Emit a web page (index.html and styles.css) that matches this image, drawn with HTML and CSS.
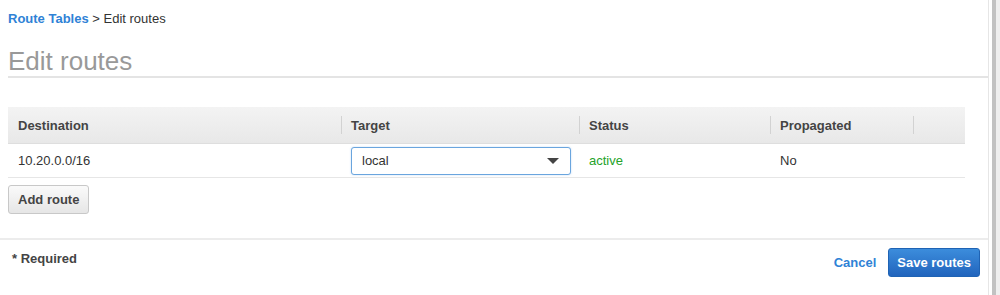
FILE: index.html
```html
<!DOCTYPE html>
<html lang="en">
<head>
  <meta charset="UTF-8">
  <meta name="viewport" content="width=device-width, initial-scale=1.0">
  <title>Edit routes</title>
  <link rel="stylesheet" href="styles.css">
</head>
<body>
  <div class="page">
    <div class="main">
      <div class="crumbs">
        <a href="#">Route Tables</a> &gt; Edit routes
      </div>

      <h1>Edit routes</h1>

      <table class="routes">
        <thead>
          <tr>
            <th class="col-dest">Destination</th>
            <th class="col-target">Target</th>
            <th class="col-status">Status</th>
            <th class="col-prop">Propagated</th>
            <th class="col-del"></th>
          </tr>
        </thead>
        <tbody>
          <tr>
            <td>10.20.0.0/16</td>
            <td>
              <div class="select">
                <span>local</span>
                <span class="caret"></span>
              </div>
            </td>
            <td class="active">active</td>
            <td>No</td>
            <td></td>
          </tr>
        </tbody>
      </table>

      <button class="btn">Add route</button>

      <div class="footer">
        <div class="required">* Required</div>
        <div class="actions">
          <a href="#" class="cancel">Cancel</a>
          <button class="btn btn-primary">Save routes</button>
        </div>
      </div>
    </div>

    <div class="scrollbar">
      <div class="thumb"></div>
    </div>
  </div>
</body>
</html>
```

FILE: styles.css
```css
body {
  margin: 0;
  font-family: "Liberation Sans", Arial, Helvetica, sans-serif;
  font-size: 13px;
  color: #333;
  background: #fff;
}
.page {
  display: flex;
  height: 295px;
  overflow: hidden;
}
.main {
  flex: 1;
  min-width: 0;
  border-right: 1px solid #e6e6e6;
}
.scrollbar {
  flex: none;
  width: 11px;
  display: flex;
  padding-left: 3px;
  box-sizing: border-box;
}
.thumb {
  width: 4px;
  background: #c2c2c2;
}
.scrollbar::after {
  content: "";
  flex: 1;
  background: #efefef;
}

.crumbs {
  padding: 11px 8px 0;
  line-height: 15px;
  color: #333;
}
.crumbs a {
  color: #2f82d6;
  font-weight: bold;
  text-decoration: none;
}

h1 {
  margin: 20px 0 0 8px;
  font-size: 26px;
  line-height: 30px;
  font-weight: normal;
  color: #999;
  border-bottom: 2px solid #e4e4e4;
}

.routes {
  margin: 29px 23px 0 8px;
  width: calc(100% - 31px);
  border-collapse: collapse;
  table-layout: fixed;
}
.routes th {
  height: 36px;
  padding: 0 10px;
  text-align: left;
  font-weight: bold;
  color: #444;
  background: linear-gradient(#f3f3f3, #e8e8e8);
  border-bottom: 1px solid #dedede;
  position: relative;
}
.routes th + th::before {
  content: "";
  position: absolute;
  left: 0;
  top: 9px;
  bottom: 9px;
  border-left: 1px solid #d2d2d2;
}
.col-dest { width: 313px; }
.col-target { width: 218px; }
.col-status { width: 171px; }
.col-prop { width: 123px; }
.routes td {
  height: 33px;
  padding: 0 10px;
  border-bottom: 1px solid #e6e6e6;
  color: #333;
}
.routes td.active {
  color: #25a22a;
}

.select {
  display: flex;
  align-items: center;
  justify-content: space-between;
  height: 26px;
  margin-right: -2px;
  padding: 0 10px;
  border: 1px solid #6aa5de;
  border-radius: 3px;
  box-shadow: 0 0 2px rgba(70, 140, 220, 0.35);
  background: #fff;
}
.caret {
  width: 0;
  height: 0;
  border-left: 6px solid transparent;
  border-right: 6px solid transparent;
  border-top: 6px solid #444;
  margin-right: 1px;
}

.btn {
  font-family: inherit;
  font-size: 13px;
  font-weight: bold;
  color: #444;
  height: 29px;
  padding: 0 9px;
  border: 1px solid #c8c8c8;
  border-radius: 3px;
  background: linear-gradient(#fafafa, #e6e6e6);
  cursor: pointer;
}
.main > .btn {
  margin: 7px 0 0 8px;
  display: block;
}
.btn-primary {
  color: #fff;
  border-color: #1f63b4;
  background: linear-gradient(#3c8ddc, #2164bd);
  padding: 0 8px;
}

.footer {
  margin-top: 24px;
  border-top: 2px solid #ececec;
  display: flex;
  justify-content: space-between;
  padding: 8px 8px 0 12px;
}
.required {
  padding-top: 3px;
  line-height: 15px;
  font-weight: bold;
  color: #444;
}
.actions {
  display: flex;
  align-items: center;
  gap: 12px;
}
.cancel {
  color: #2f82d6;
  font-weight: bold;
  text-decoration: none;
}
```
